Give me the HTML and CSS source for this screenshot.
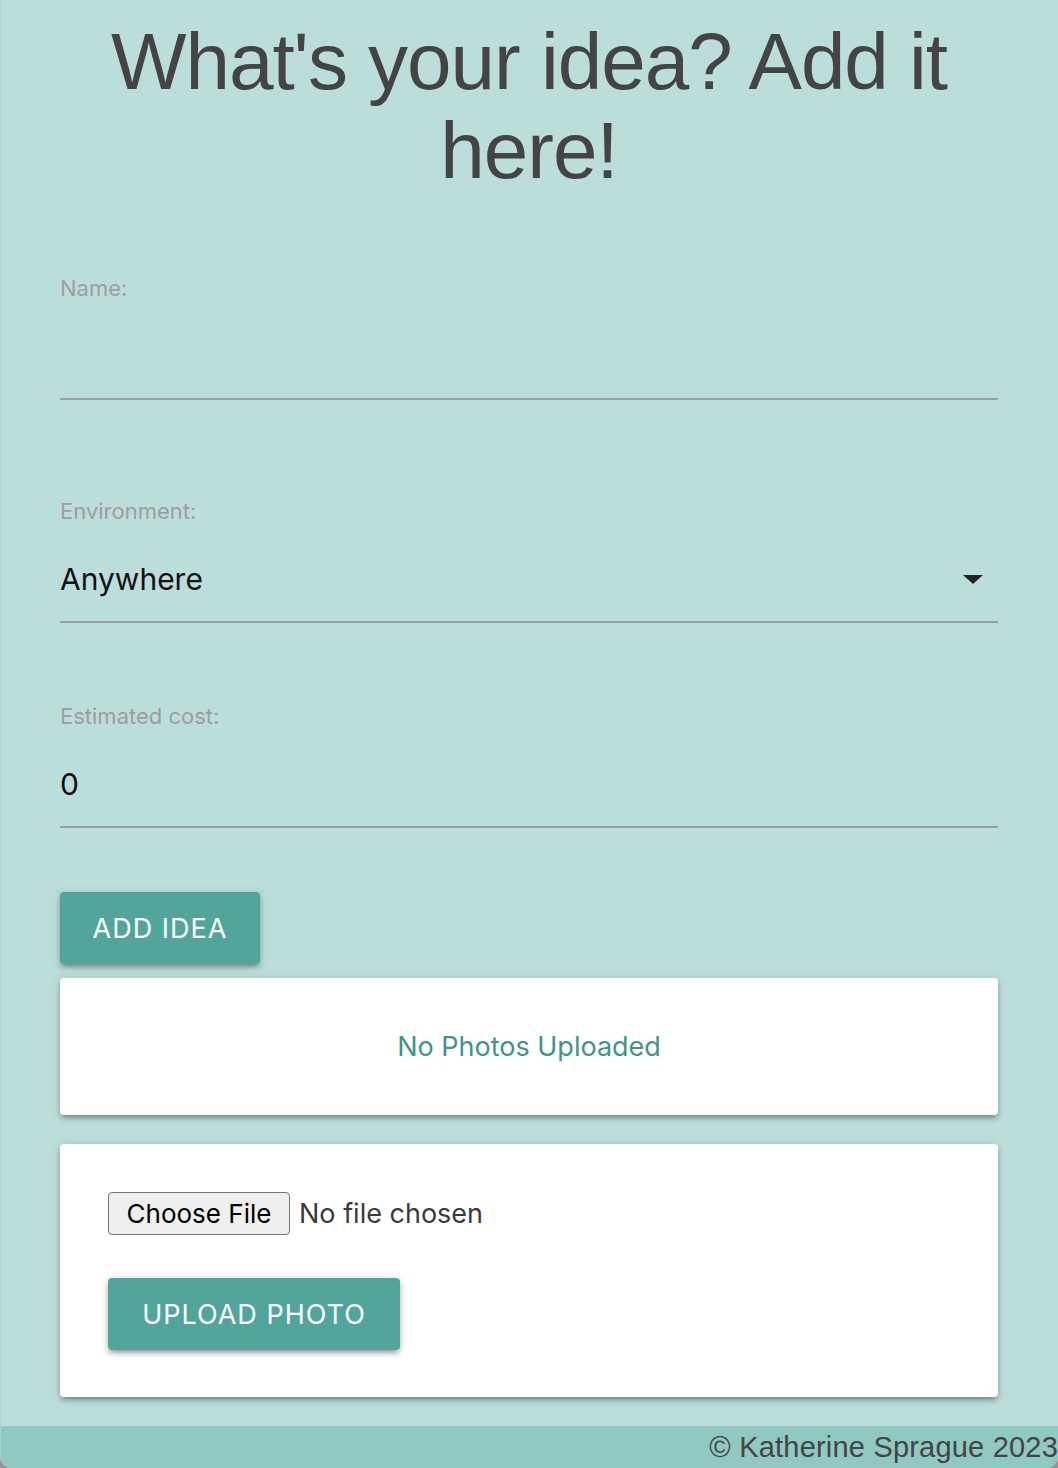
FILE: index.html
```html
<!DOCTYPE html>
<html lang="en">
<head>
<meta charset="utf-8">
<title>Add an idea</title>
<link rel="stylesheet" href="styles.css">
</head>
<body>
<main class="page">
  <h1 class="title">What's your idea? Add it here!</h1>
  <form class="idea-form">
    <div class="field field-name">
      <label class="field-label" for="name">Name:</label>
      <input class="control" id="name" type="text" value="">
    </div>
    <div class="field field-env">
      <label class="field-label">Environment:</label>
      <div class="control select"><span>Anywhere</span><span class="caret"></span></div>
    </div>
    <div class="field field-cost">
      <label class="field-label" for="cost">Estimated cost:</label>
      <input class="control" id="cost" type="text" value="0">
    </div>
    <button class="btn btn-add" type="button">ADD IDEA</button>
  </form>
  <section class="card card-photos">
    <p class="empty-text">No Photos Uploaded</p>
  </section>
  <section class="card card-upload">
    <div class="file-row">
      <span class="file-btn">Choose File</span>
      <span class="file-name">No file chosen</span>
    </div>
    <button class="btn btn-upload" type="button">UPLOAD PHOTO</button>
  </section>
</main>
<footer class="footer">© Katherine Sprague 2023</footer>
</body>
</html>
```
FILE: styles.css
```css
html {
  background: #9c8e96;
  height: 100%;
}
body {
  margin: 0;
  min-height: 100vh;
  display: flex;
  flex-direction: column;
  background: #bcdedb;
  border-radius: 0 0 12px 12px;
  overflow: hidden;
  border-left: 1px solid #b2d3d0;
  box-sizing: border-box;
  font-family: "Inter", "Noto Sans", sans-serif;
}
.page {
  padding: 0 60px 0 59px;
  display: flex;
  flex-direction: column;
}
.title {
  margin: 17px 0 0;
  font-family: "Liberation Sans", Arial, sans-serif;
  font-weight: 400;
  font-size: 80px;
  line-height: 89px;
  letter-spacing: -1px;
  color: #444444;
  text-align: center;
}
.idea-form {
  display: flex;
  flex-direction: column;
  align-items: flex-start;
}
.field {
  width: 100%;
  display: flex;
  flex-direction: column;
}
.field-name { margin-top: 80px; }
.field-env { margin-top: 98px; }
.field-cost { margin-top: 80px; }
.field-label {
  font-size: 22px;
  line-height: 26px;
  height: 26px;
  color: #9e9e9e;
}
.control {
  margin: 13px 0 0;
  padding: 0;
  height: 84px;
  line-height: 84px;
  box-sizing: content-box;
  border: none;
  border-bottom: 2px solid #9e9e9e;
  background: transparent;
  font-family: "Inter", "Noto Sans", sans-serif;
  font-size: 30px;
  color: #111111;
  outline: none;
  width: 100%;
}
.select {
  display: flex;
  align-items: center;
  justify-content: space-between;
  padding-right: 15px;
  box-sizing: border-box;
  height: 86px;
}
.caret {
  width: 0;
  height: 0;
  border-left: 10px solid transparent;
  border-right: 10px solid transparent;
  border-top: 9px solid #222222;
}
.btn {
  border: none;
  border-radius: 4px;
  background: #52a59b;
  color: #ffffff;
  font-family: "Inter", "Noto Sans", sans-serif;
  font-size: 27px;
  letter-spacing: 1px;
  height: 72px;
  padding: 0 32px;
  box-shadow: 0 4px 4px 0 rgba(0,0,0,0.14), 0 6px 2px -4px rgba(0,0,0,0.12), 0 2px 10px 0 rgba(0,0,0,0.2);
}
.btn-add {
  margin-top: 64px;
  width: 200px;
}
.btn-upload {
  margin-top: 43px;
  width: 292px;
}
.card {
  background: #ffffff;
  border-radius: 4px;
  box-shadow: 0 4px 4px 0 rgba(0,0,0,0.14), 0 6px 2px -4px rgba(0,0,0,0.12), 0 2px 10px 0 rgba(0,0,0,0.2);
}
.card-photos {
  margin-top: 14px;
  height: 137px;
  display: flex;
  align-items: center;
  justify-content: center;
}
.empty-text {
  margin: 0;
  font-size: 27px;
  color: #3f9586;
}
.card-upload {
  margin-top: 29px;
  padding: 48px 48px 47px;
  display: flex;
  flex-direction: column;
  align-items: flex-start;
}
.file-row {
  display: flex;
  align-items: center;
  height: 43px;
  font-size: 26.5px;
}
.file-btn {
  box-sizing: border-box;
  height: 43px;
  width: 182px;
  display: flex;
  align-items: center;
  justify-content: center;
  background: #efefef;
  border: 1.5px solid #767676;
  border-radius: 4px;
  color: #000000;
  font-size: 26px;
}
.file-name {
  margin-left: 9px;
  color: #3a3a3a;
  font-size: 27px;
}
.footer {
  margin-top: 29px;
  height: 42px;
  background: #8fc9c2;
  color: #444444;
  font-family: "Liberation Sans", Arial, sans-serif;
  font-size: 29px;
  line-height: 42px;
  text-align: right;
  white-space: nowrap;
  letter-spacing: 0.2px;
}
```
